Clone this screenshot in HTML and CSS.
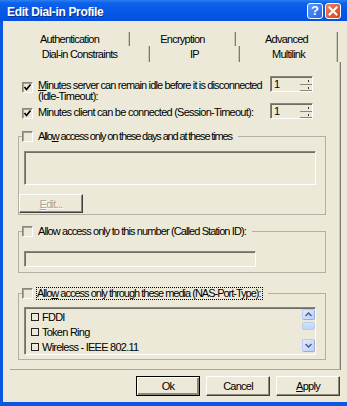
FILE: index.html
```html
<!DOCTYPE html>
<html>
<head>
<meta charset="utf-8">
<link rel="stylesheet" href="styles.css">
</head>
<body>
<div class="window">
  <div class="titlebar">
    <span class="title">Edit Dial-in Profile</span>
    <span class="tb-btn help">?</span>
    <span class="tb-btn close"><svg width="10" height="10" viewBox="0 0 10 10"><path d="M1.5 1.5 L8.5 8.5 M8.5 1.5 L1.5 8.5" stroke="#fff" stroke-width="2" stroke-linecap="square"/></svg></span>
  </div>
  <div class="frame">
    <div class="tabs">
      <div class="tabrow row1">
        <div class="tab w120">Authentication</div>
        <div class="tab w106">Encryption</div>
        <div class="tab w102">Advanced</div>
      </div>
      <div class="tabrow row2">
        <div class="tab w140">Dial-in Constraints</div>
        <div class="tab w90">IP</div>
        <div class="tab w98">Multilink</div>
      </div>
    </div>
    <div class="panel">
      <div class="opt opt-a">
        <span class="cb checked"><svg width="9" height="9" viewBox="0 0 9 9"><path d="M1.5 4 L3.5 6.5 L7.5 1.5" stroke="#000" stroke-width="1.6" fill="none"/></svg></span>
        <div class="opt-label">
          <div class="line tight"><u>M</u>inutes server can remain idle before it is disconnected</div>
          <div class="line">(Idle-Timeout):</div>
        </div>
        <div class="spin"><span class="spin-val">1</span><span class="spin-btns"><span class="sb"></span><span class="sb"></span></span></div>
      </div>
      <div class="opt opt-b">
        <span class="cb checked"><svg width="9" height="9" viewBox="0 0 9 9"><path d="M1.5 4 L3.5 6.5 L7.5 1.5" stroke="#000" stroke-width="1.6" fill="none"/></svg></span>
        <div class="opt-label">
          <div class="line">Minutes client can be connected (Session-Timeout):</div>
        </div>
        <div class="spin"><span class="spin-val">1</span><span class="spin-btns"><span class="sb"></span><span class="sb"></span></span></div>
      </div>

      <fieldset class="group g1">
        <legend><span class="lg"><span class="cb"></span><span class="lg-text t1">Allo<u>w</u> access only on these days and at these times</span></span></legend>
        <div class="sunken box1"></div>
        <div class="btn disabled edit"><u>E</u>dit...</div>
      </fieldset>

      <fieldset class="group g2">
        <legend><span class="lg"><span class="cb"></span><span class="lg-text t2">Allow access only to this number (Called Station ID):</span></span></legend>
        <div class="sunken box2"></div>
      </fieldset>

      <fieldset class="group g3">
        <legend><span class="lg"><span class="cb"></span><span class="lg-text t3 focus">Allo<u>w</u> access only through these media (NAS-Port-Type):</span></span></legend>
        <div class="sunken list">
          <div class="items">
            <div class="item"><span class="icb"></span>FDDI</div>
            <div class="item"><span class="icb"></span>Token Ring</div>
            <div class="item"><span class="icb"></span>Wireless - IEEE 802.11</div>
          </div>
          <div class="scroll">
            <span class="sbtn up"><svg width="7" height="5" viewBox="0 0 7 5"><path d="M0.5 4 L3.5 1 L6.5 4" stroke="#4D6185" stroke-width="1.5" fill="none"/></svg></span>
            <span class="thumb"></span>
            <span class="sbtn down"><svg width="7" height="5" viewBox="0 0 7 5"><path d="M0.5 1 L3.5 4 L6.5 1" stroke="#4D6185" stroke-width="1.5" fill="none"/></svg></span>
          </div>
        </div>
      </fieldset>
    </div>
    <div class="buttons">
      <div class="btn default">Ok</div>
      <div class="btn">Cancel</div>
      <div class="btn"><u>A</u>pply</div>
    </div>
  </div>
</div>
</body>
</html>
```

FILE: styles.css
```css
html, body {
  margin: 0;
  padding: 0;
}
body {
  width: 347px;
  height: 406px;
  overflow: hidden;
  background: #0A57E0;
  font-family: "Liberation Sans", Arial, sans-serif;
  font-size: 11px;
  letter-spacing: -0.75px;
  color: #000;
}
.window {
  display: flex;
  flex-direction: column;
  height: 406px;
}
.titlebar {
  height: 21px;
  flex: none;
  display: flex;
  align-items: center;
  padding: 0 6px 0 7px;
  background: linear-gradient(#2E7FF2 0, #0D62EA 3px, #0658E6 50%, #0350DE 100%);
}
.title {
  flex: 1;
  color: #fff;
  font-weight: bold;
  font-size: 12px;
  letter-spacing: -0.35px;
  text-shadow: 1px 1px #0B2C8E;
  padding-top: 2px;
}
.tb-btn {
  width: 16px;
  height: 16px;
  box-sizing: border-box;
  border: 1px solid #fff;
  border-radius: 3px;
  display: flex;
  align-items: center;
  justify-content: center;
  color: #fff;
  font-weight: bold;
  font-size: 13px;
  letter-spacing: 0;
}
.help {
  background: linear-gradient(135deg, #5B97F8, #2366EA);
  margin-right: 2px;
}
.close {
  background: linear-gradient(135deg, #E98460, #D6451E);
}
.frame {
  flex: 1;
  margin: 0 0 4px 3px;
  background: #ECE9D8;
  display: flex;
  flex-direction: column;
}
.tabs {
  margin: 11px 0 0 7px;
}
.tabrow {
  display: flex;
}
.row1 .tab {
  height: 14px;
  line-height: 14px;
}
.row2 .tab {
  height: 16px;
  line-height: 16px;
}
.tab {
  box-sizing: border-box;
  text-align: center;
  border-right: 1px solid #7E7C72;
  box-shadow: inset -1px 0 #C9C6B6;
}
.w120 { width: 120px; }
.w106 { width: 106px; }
.w102 { width: 102px; }
.w140 { width: 140px; }
.w90 { width: 90px; }
.w98 { width: 98px; }

.panel {
  margin-left: 7px;
  width: 331px;
  height: 308px;
  box-sizing: border-box;
  border-right: 1px solid #7E7C72;
  border-bottom: 1px solid #A9A797;
  box-shadow: inset -1px 0 #C9C6B6;
  padding: 14px 0 0 8px;
}
.opt {
  display: flex;
  margin-left: 4px;
}
.opt-b {
  margin-top: 1px;
}
.cb {
  flex: none;
  width: 11px;
  height: 11px;
  box-sizing: border-box;
  border-top: 1px solid #8A877A;
  border-left: 1px solid #8A877A;
  border-right: 1px solid #fff;
  border-bottom: 1px solid #fff;
  box-shadow: inset 1px 1px #A5A294;
  display: flex;
  align-items: center;
  justify-content: center;
}
.opt-a .cb { margin-top: 6px; }
.opt-b .cb { margin-top: 5px; }
.opt-label {
  margin-left: 5px;
  width: 230px;
  margin-right: 2px;
  line-height: 11px;
}
.opt-a .opt-label { margin-top: 4px; }
.opt-b .opt-label { margin-top: 4px; }
.line {
  white-space: nowrap;
}
.tight {
  letter-spacing: -0.85px;
}
.spin {
  width: 43px;
  height: 16px;
  box-sizing: border-box;
  border-top: 1px solid #8A877A;
  border-left: 1px solid #8A877A;
  border-right: 1px solid #fff;
  border-bottom: 1px solid #fff;
  box-shadow: inset 1px 1px #6F6D64;
  display: flex;
}
.spin-val {
  flex: 1;
  padding-left: 3px;
  line-height: 14px;
}
.spin-btns {
  width: 12px;
  display: flex;
  flex-direction: column;
  padding: 1px 0 0 0;
}
.sb {
  height: 6px;
  border-bottom: 1px solid #8A877A;
  position: relative;
}
.sb::after {
  content: "";
  position: absolute;
  left: 8px;
  top: 2px;
  width: 1px;
  height: 2px;
  background: #333;
}

.group {
  margin: 0;
  padding: 0;
  width: 308px;
  box-sizing: border-box;
  min-width: 0;
  border: 1px solid #B3B0A2;
}
.group legend {
  padding: 0;
  margin-left: 3px;
  line-height: 11px;
}
.lg {
  display: flex;
  align-items: center;
  padding-right: 6px;
}
.lg-text {
  margin-left: 5px;
  white-space: nowrap;
}
.t1 { letter-spacing: -1.15px; }
.t2 { letter-spacing: -0.9px; }
.t3 { letter-spacing: -1px; }
.focus {
  outline: 1px dotted #000;
  outline-offset: 0;
  padding: 0 1px 0 0;
  margin-left: 4px;
}
.g1 { margin-top: 12px; padding-bottom: 1px; }
.g2 { margin-top: 11px; padding-bottom: 5px; }
.g3 { margin-top: 15px; padding-bottom: 4px; }

.sunken {
  margin-left: 5px;
  box-sizing: border-box;
  border-top: 1px solid #8A877A;
  border-left: 1px solid #8A877A;
  border-right: 1px solid #fff;
  border-bottom: 1px solid #fff;
  box-shadow: inset 1px 1px #6F6D64;
}
.box1 {
  margin-top: 9px;
  width: 292px;
  height: 34px;
}
.box2 {
  margin-top: 14px;
  width: 232px;
  height: 16px;
}
.list {
  margin-top: 8px;
  width: 292px;
  height: 48px;
  display: flex;
  padding: 1px 0 0 1px;
}
.items {
  flex: 1;
  overflow: hidden;
  padding-left: 5px;
}
.item {
  display: flex;
  align-items: center;
  height: 15px;
  white-space: nowrap;
}
.icb {
  width: 8px;
  height: 8px;
  box-sizing: border-box;
  border: 1px solid #222;
  margin-right: 3px;
  flex: none;
}
.scroll {
  width: 13px;
  display: flex;
  flex-direction: column;
}
.sbtn {
  box-sizing: border-box;
  border: 1px solid #B8CBF5;
  border-right-color: #98AEE0;
  border-bottom-color: #98AEE0;
  border-radius: 2px;
  background: linear-gradient(135deg, #E2EBFE, #BCCFFA);
  display: flex;
  align-items: center;
  justify-content: center;
}
.up { height: 11px; }
.down { height: 13px; margin-top: 9px; }
.thumb {
  height: 8px;
  margin-top: 2px;
  box-sizing: border-box;
  border: 1px solid #B8CBF5;
  border-radius: 2px;
  background: linear-gradient(#D5E1FC, #C0D2FA);
}

.btn {
  width: 64px;
  height: 20px;
  box-sizing: border-box;
  border-top: 1px solid #fff;
  border-left: 1px solid #fff;
  border-right: 1px solid #404040;
  border-bottom: 1px solid #404040;
  box-shadow: inset -1px -1px #8A877A;
  display: flex;
  align-items: center;
  justify-content: center;
}
.btn.default {
  border: 1px solid #000;
  box-shadow: inset 1px 1px #fff, inset -2px -2px #8A877A;
}
.btn.disabled {
  color: #A7A597;
}
.edit {
  margin-top: 9px;
  height: 19px;
  text-shadow: 1px 1px #fff;
}
.buttons {
  display: flex;
  justify-content: flex-end;
  gap: 6px;
  margin-top: 6px;
  padding-right: 7px;
}
```
